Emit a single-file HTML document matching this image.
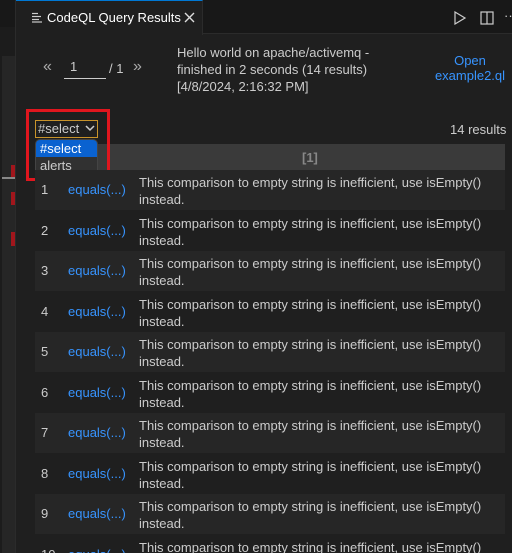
<!DOCTYPE html>
<html style="width:512px;height:553px;overflow:hidden"><head><style>
*{margin:0;padding:0;box-sizing:border-box}
body{width:512px;height:553px;background:#1f1f1f;font-family:"Liberation Sans",sans-serif;font-size:13px;color:#cccccc;position:relative;overflow:hidden}
.abs{position:absolute}
.row{position:absolute;left:35px;width:470px;height:40px}
.row.o{background:#262626}
.n{position:absolute;left:6px;top:12px;color:#ccc}
.l{position:absolute;left:33px;top:12px;color:#3794ff}
.m{position:absolute;left:104px;top:4px;line-height:17px;color:#ccc;width:360px}
</style></head><body>
<div class="abs" style="left:0;top:0;width:16px;height:553px;background:#181818"></div>
<div class="abs" style="left:0;top:27px;width:15px;height:526px;background:#1c1c1c"></div>
<div class="abs" style="left:2px;top:56px;width:13px;height:497px;background:#262626"></div>
<div class="abs" style="left:15px;top:0;width:1px;height:553px;background:#2b2b2b"></div>
<div class="abs" style="left:2px;top:177px;width:13px;height:2px;background:#888"></div>
<div class="abs" style="left:11px;top:165px;width:4px;height:12px;background:#a1161c"></div>
<div class="abs" style="left:11px;top:192px;width:4px;height:13px;background:#a1161c"></div>
<div class="abs" style="left:11px;top:232px;width:4px;height:14px;background:#a1161c"></div>
<div class="abs" style="left:16px;top:0;width:496px;height:34px;background:#181818;border-bottom:1px solid #2b2b2b"></div>
<div class="abs" style="left:16px;top:0;width:187px;height:35px;background:#1f1f1f;border-top:1px solid #0078d4;border-right:1px solid #2b2b2b"></div>
<svg class="abs" style="left:31px;top:12px" width="12" height="11"><g stroke="#ccc" stroke-width="1.2"><line x1="1" y1="1.5" x2="7" y2="1.5"/><line x1="1" y1="4.5" x2="10" y2="4.5"/><line x1="1" y1="7.5" x2="8" y2="7.5"/><line x1="1" y1="10" x2="11" y2="10"/></g></svg>
<div class="abs" style="left:47px;top:10px;color:#fff;font-size:13px">CodeQL Query Results</div>
<svg class="abs" style="left:184px;top:12px" width="11" height="11"><path d="M1 1 L10 10 M10 1 L1 10" stroke="#ddd" stroke-width="1.4"/></svg>
<svg class="abs" style="left:453px;top:11px" width="14" height="14"><path d="M2 1 L12 7 L2 13 Z" fill="none" stroke="#ccc" stroke-width="1.2"/></svg>
<svg class="abs" style="left:480px;top:11px" width="14" height="14"><rect x="1" y="1" width="12" height="12" fill="none" stroke="#ccc" stroke-width="1.2"/><line x1="7" y1="1" x2="7" y2="13" stroke="#ccc" stroke-width="1.2"/></svg>
<div class="abs" style="left:504px;top:8px;color:#ccc">··</div>
<div class="abs" style="left:43px;top:58px;font-size:16px;color:#aaa">«</div>
<div class="abs" style="left:70px;top:59px;color:#ccc">1</div>
<div class="abs" style="left:64px;top:78px;width:42px;height:1px;background:#ccc"></div>
<div class="abs" style="left:109px;top:61px;color:#ccc">/ 1</div>
<div class="abs" style="left:133px;top:58px;font-size:16px;color:#aaa">»</div>
<div class="abs" style="left:177px;top:44px;line-height:17px;color:#ccc">Hello world on apache/activemq -<br>finished in 2 seconds (14 results)<br>[4/8/2024, 2:16:32 PM]</div>
<div class="abs" style="left:434px;top:53px;line-height:15px;color:#3794ff;text-align:center;width:72px">Open<br>example2.ql</div>
<div class="abs" style="left:450px;top:122px;color:#ccc">14 results</div>
<div class="abs" style="left:35px;top:144px;width:470px;height:26px;background:#3a3a3a"></div>
<div class="abs" style="left:302px;top:150px;color:#888;font-weight:bold">[1]</div>
<div class="abs" style="left:26px;top:109px;width:84px;height:72px;border:3px solid #e0161e"></div>
<div class="abs" style="left:35px;top:120px;width:63px;height:18px;border:1px solid #c8932a;background:#1f1f1f"></div>
<div class="abs" style="left:38px;top:121px;color:#ccc">#select</div>
<svg class="abs" style="left:85px;top:124px" width="10" height="8"><path d="M1 2 L5 6 L9 2" fill="none" stroke="#ccc" stroke-width="1.5"/></svg>
<div class="abs" style="left:35px;top:139px;width:63px;height:36px;background:#313131;border:1px solid #444;border-radius:5px;overflow:hidden">
<div style="background:#0a62d0;color:#fff;height:17px;padding-left:4px;line-height:17px">#select</div>
<div style="color:#ccc;padding-left:4px;line-height:17px">alerts</div></div>
<div class="row o" style="top:170px"><span class="n">1</span><span class="l">equals(...)</span><span class="m">This comparison to empty string is inefficient, use isEmpty() instead.</span></div>
<div class="row" style="top:210.5px"><span class="n">2</span><span class="l">equals(...)</span><span class="m">This comparison to empty string is inefficient, use isEmpty() instead.</span></div>
<div class="row o" style="top:251px"><span class="n">3</span><span class="l">equals(...)</span><span class="m">This comparison to empty string is inefficient, use isEmpty() instead.</span></div>
<div class="row" style="top:291.5px"><span class="n">4</span><span class="l">equals(...)</span><span class="m">This comparison to empty string is inefficient, use isEmpty() instead.</span></div>
<div class="row o" style="top:332px"><span class="n">5</span><span class="l">equals(...)</span><span class="m">This comparison to empty string is inefficient, use isEmpty() instead.</span></div>
<div class="row" style="top:372.5px"><span class="n">6</span><span class="l">equals(...)</span><span class="m">This comparison to empty string is inefficient, use isEmpty() instead.</span></div>
<div class="row o" style="top:413px"><span class="n">7</span><span class="l">equals(...)</span><span class="m">This comparison to empty string is inefficient, use isEmpty() instead.</span></div>
<div class="row" style="top:453.5px"><span class="n">8</span><span class="l">equals(...)</span><span class="m">This comparison to empty string is inefficient, use isEmpty() instead.</span></div>
<div class="row o" style="top:494px"><span class="n">9</span><span class="l">equals(...)</span><span class="m">This comparison to empty string is inefficient, use isEmpty() instead.</span></div>
<div class="row" style="top:534.5px;height:18.5px;overflow:hidden"><span class="n">10</span><span class="l">equals(...)</span><span class="m">This comparison to empty string is inefficient, use isEmpty() instead.</span></div>
</body></html>
